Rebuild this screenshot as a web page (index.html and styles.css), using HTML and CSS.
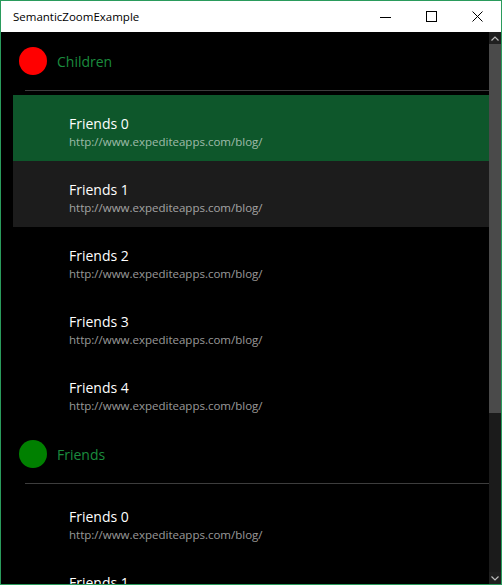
FILE: index.html
```html
<!DOCTYPE html>
<html lang="en">
<head>
    <meta charset="UTF-8">
    <title>SemanticZoomExample</title>
    <link rel="stylesheet" href="styles.css">
</head>
<body>
    <div class="window">
        <div class="titlebar">
            <span class="title">SemanticZoomExample</span>
            <div class="controls">
                <span class="ctl">
                    <svg width="12" height="12" viewBox="0 0 12 12"><path d="M0 6.5h11" stroke="#000" stroke-width="1"/></svg>
                </span>
                <span class="ctl">
                    <svg width="12" height="12" viewBox="0 0 12 12"><rect x="0.5" y="0.5" width="10" height="10" fill="none" stroke="#000" stroke-width="1"/></svg>
                </span>
                <span class="ctl">
                    <svg width="12" height="12" viewBox="0 0 12 12"><path d="M0.5 0.5l10 10M10.5 0.5l-10 10" stroke="#000" stroke-width="1"/></svg>
                </span>
            </div>
        </div>

        <div class="content">
            <div class="list">
                <div class="group-head">
                    <span class="dot red"></span>
                    <span class="group-name">Children</span>
                </div>
                <div class="divider"></div>
                <div class="item selected">
                    <div class="name">Friends 0</div>
                    <div class="url">http://www.expediteapps.com/blog/</div>
                </div>
                <div class="item hover">
                    <div class="name">Friends 1</div>
                    <div class="url">http://www.expediteapps.com/blog/</div>
                </div>
                <div class="item">
                    <div class="name">Friends 2</div>
                    <div class="url">http://www.expediteapps.com/blog/</div>
                </div>
                <div class="item">
                    <div class="name">Friends 3</div>
                    <div class="url">http://www.expediteapps.com/blog/</div>
                </div>
                <div class="item">
                    <div class="name">Friends 4</div>
                    <div class="url">http://www.expediteapps.com/blog/</div>
                </div>

                <div class="group-head">
                    <span class="dot green"></span>
                    <span class="group-name">Friends</span>
                </div>
                <div class="divider"></div>
                <div class="item">
                    <div class="name">Friends 0</div>
                    <div class="url">http://www.expediteapps.com/blog/</div>
                </div>
                <div class="item">
                    <div class="name">Friends 1</div>
                    <div class="url">http://www.expediteapps.com/blog/</div>
                </div>
            </div>

            <div class="scrollbar">
                <div class="arrow">
                    <svg width="8" height="5" viewBox="0 0 8 5"><path d="M0.5 4.5L4 1l3.5 3.5" fill="none" stroke="#bbb" stroke-width="1.2"/></svg>
                </div>
                <div class="thumb"></div>
                <div class="track"></div>
                <div class="arrow">
                    <svg width="8" height="5" viewBox="0 0 8 5"><path d="M0.5 0.5L4 4l3.5-3.5" fill="none" stroke="#bbb" stroke-width="1.2"/></svg>
                </div>
            </div>
        </div>
    </div>
</body>
</html>
```

FILE: styles.css
```css
body{
    margin: 0;
    font-family: "Segoe UI", "Open Sans", sans-serif;
}
.window{
    width: 502px;
    height: 585px;
    box-sizing: border-box;
    border: 1px solid #2a9b5c;
    display: flex;
    flex-direction: column;
    overflow: hidden;
}
.titlebar{
    height: 31px;
    background-color: #fff;
    display: flex;
    align-items: center;
    flex-shrink: 0;
}
.title{
    padding-left: 12px;
    font-size: 11.5px;
    color: #000;
}
.controls{
    margin-left: auto;
    display: flex;
}
.ctl{
    width: 46px;
    height: 31px;
    display: flex;
    align-items: center;
    justify-content: center;
}
.content{
    flex: 1;
    display: flex;
    background-color: #000;
    overflow: hidden;
}
.list{
    flex: 1;
    overflow: hidden;
}
.group-head{
    height: 58px;
    display: flex;
    align-items: center;
    padding-left: 18px;
}
.dot{
    width: 28px;
    height: 28px;
    border-radius: 50%;
}
.red{
    background-color: #ff0000;
}
.green{
    background-color: #008000;
}
.group-name{
    margin-left: 10px;
    font-size: 14px;
    color: #1b8c3e;
}
.divider{
    height: 1px;
    margin-left: 24px;
    margin-bottom: 4px;
    background-color: #3d3d3d;
}
.item{
    height: 66px;
    margin-left: 12px;
    padding-left: 56px;
    padding-top: 18px;
    box-sizing: border-box;
}
.selected{
    background-color: #0e572b;
}
.hover{
    background-color: #1c1c1c;
}
.name{
    font-size: 14px;
    line-height: 21px;
    color: #fff;
}
.url{
    font-size: 11.5px;
    line-height: 16px;
    color: rgba(255, 255, 255, 0.6);
}
.scrollbar{
    width: 12px;
    display: flex;
    flex-direction: column;
    background-color: #171717;
}
.arrow{
    height: 12px;
    display: flex;
    align-items: center;
    justify-content: center;
    background-color: #1f1f1f;
}
.thumb{
    height: 369px;
    background-color: #4a4a4a;
}
.track{
    flex: 1;
    background-color: #1b1b1b;
}
```
